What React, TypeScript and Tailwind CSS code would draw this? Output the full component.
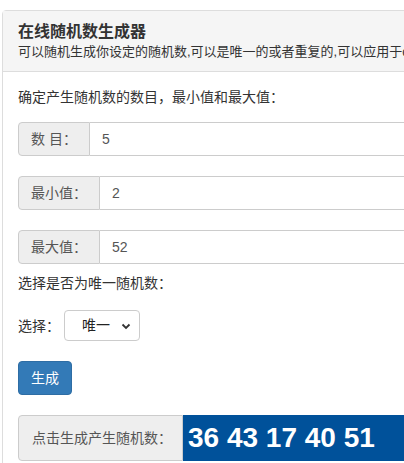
import React from "react";

const font = { fontFamily: '"Liberation Sans", "Noto Sans CJK SC", Arial, sans-serif' };

function Addon({ children, w }: { children: React.ReactNode; w: string }) {
  return (
    <div
      className={`flex items-center justify-center shrink-0 h-full bg-[#eeeeee] border border-[#cccccc] rounded-l-[4px] text-[14px] text-[#555555] ${w}`}
    >
      {children}
    </div>
  );
}

function InputRow({ label, value, w }: { label: string; value: string; w: string }) {
  return (
    <div className="flex h-[34px] w-[600px]">
      <Addon w={w}>{label}</Addon>
      <div className="flex items-center flex-1 h-full border border-l-0 border-[#cccccc] bg-white px-[12px] text-[14px] text-[#555555]">
        {value}
      </div>
    </div>
  );
}

export default function App() {
  return (
    <div className="w-[404px] h-[463px] overflow-hidden bg-white text-[#333333]" style={font}>
      <div className="ml-[2px] mt-[10px] w-[640px] border border-[#dddddd] rounded-[4px]">
        <div className="bg-[#f5f5f5] border-b border-[#dddddd] px-[15px] pt-[11px] pb-[9px]">
          <div className="text-[16px] font-bold leading-[20px] text-[#333333]">在线随机数生成器</div>
          <div className="text-[13px] leading-[20px] text-[#333333] whitespace-nowrap">
            可以随机生成你设定的随机数,可以是唯一的或者重复的,可以应用于dota抽奖
          </div>
        </div>
        <div className="px-[15px] pt-[15px] pb-[15px]">
          <div className="text-[14px] leading-[20px]">确定产生随机数的数目，最小值和最大值：</div>
          <div className="mt-[15px] flex flex-col gap-[20px]">
            <InputRow label="数 目：" value="5" w="w-[72px]" />
            <InputRow label="最小值：" value="2" w="w-[82px]" />
            <InputRow label="最大值：" value="52" w="w-[82px]" />
          </div>
          <div className="mt-[9px] text-[14px] leading-[20px]">选择是否为唯一随机数：</div>
          <div className="mt-[17px] flex items-center h-[31px]">
            <span className="text-[14px] leading-[20px]">选择：</span>
            <div className="ml-[4px] relative w-[76px] h-[31px] border border-[#cccccc] rounded-[4px] bg-white flex items-center">
              <span className="ml-[17px] text-[14px] text-[#222222]">唯一</span>
              <svg className="absolute right-[8px] top-[12px]" width="10" height="7" viewBox="0 0 10 7">
                <path d="M1.5 1.5 L5 5 L8.5 1.5" fill="none" stroke="#333" strokeWidth="1.8" />
              </svg>
            </div>
          </div>
          <div className="mt-[20px]">
            <div className="w-[54px] h-[34px] bg-[#337ab7] border border-[#2e6da4] rounded-[4px] text-white text-[14px] flex items-center justify-center">
              生成
            </div>
          </div>
          <div className="mt-[20px] flex h-[46px] w-[600px]">
            <div className="flex items-center shrink-0 w-[165px] h-full bg-[#eeeeee] border border-[#cccccc] rounded-l-[4px] pl-[13px] text-[14px] text-[#555555]">
              点击生成产生随机数：
            </div>
            <div className="flex items-center flex-1 h-full bg-[#00519a] pl-[5px] text-white text-[28px] font-bold whitespace-nowrap">
              36 43 17 40 51
            </div>
          </div>
        </div>
      </div>
    </div>
  );
}
